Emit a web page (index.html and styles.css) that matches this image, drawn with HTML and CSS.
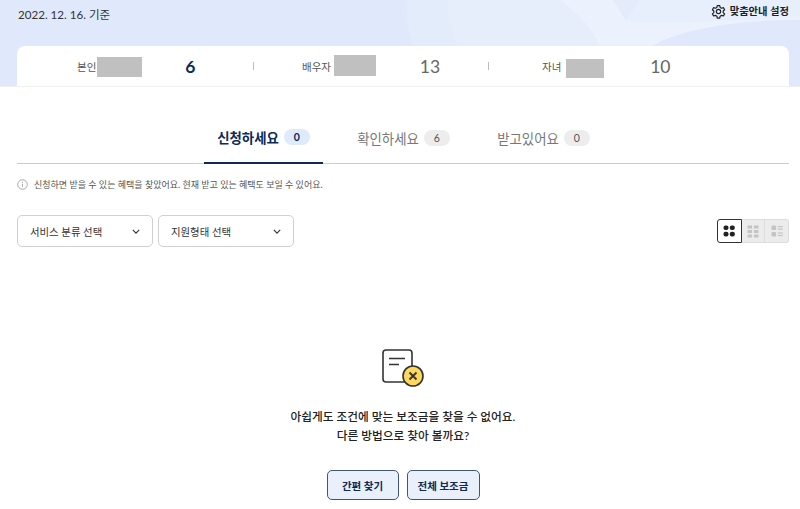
FILE: index.html
```html
<!DOCTYPE html>
<html lang="ko">
<head>
    <meta charset="UTF-8">
    <meta name="viewport" content="width=device-width, initial-scale=1.0">
    <title>맞춤안내</title>
    <link rel="stylesheet" href="styles.css">
</head>
<body>
    <header class="hero">
        <!-- decorative shapes behind the header -->
        <svg class="hero-bg" width="800" height="46" viewBox="0 0 800 46" aria-hidden="true">
            <path d="M408 0 C405 15 409 35 413 46 H800 V0 Z" fill="#e3ecfb"/>
            <path d="M448 0 C447 15 452 35 458 46 H800 V0 Z" fill="#e6eefc"/>
            <path d="M560 0 C578 13 592 28 600 46 H800 V0 Z" fill="#ebf1fd"/>
            <path d="M613 0 L640 0 L626 21 Z" fill="#e4ecfb"/>
            <path d="M640 0 L626 21 C660 24 720 22 800 16 V0 Z" fill="#e8effc"/>
            <path d="M652 46 C680 30 730 20 800 20 V46 Z" fill="#e0e9fb"/>
        </svg>
        <div class="hero-top">
            <span class="base-date">2022. 12. 16. 기준</span>
            <a class="settings-link" href="#">
                <svg width="15" height="15" viewBox="0 0 24 24" fill="none" stroke="#222" stroke-width="1.9" stroke-linejoin="round">
                    <path d="M10 2.5h4l.6 3 2.3 1.3 2.9-1 2 3.4-2.3 2 0 2.6 2.3 2-2 3.4-2.9-1-2.3 1.3-.6 3h-4l-.6-3-2.3-1.3-2.9 1-2-3.4 2.3-2 0-2.6-2.3-2 2-3.4 2.9 1 2.3-1.3z"/>
                    <circle cx="12" cy="12" r="3.4"/>
                </svg>
                맞춤안내 설정
            </a>
        </div>
        <div class="stat-card">
            <div class="stat stat-self">
                <span class="stat-label">본인</span>
                <span class="mask mask-self"></span>
                <strong class="stat-value active">6</strong>
            </div>
            <div class="stat stat-spouse">
                <span class="stat-label">배우자</span>
                <span class="mask mask-spouse"></span>
                <strong class="stat-value">13</strong>
            </div>
            <div class="stat stat-child">
                <span class="stat-label">자녀</span>
                <span class="mask mask-child"></span>
                <strong class="stat-value">10</strong>
            </div>
        </div>
    </header>

    <main class="content">
        <nav class="tabs">
            <a class="tab active" href="#">신청하세요 <span class="count">0</span></a>
            <a class="tab" href="#">확인하세요 <span class="count">6</span></a>
            <a class="tab" href="#">받고있어요 <span class="count">0</span></a>
        </nav>

        <p class="notice">
            <svg width="11" height="11" viewBox="0 0 12 12" fill="none" stroke="#8a8a8a" stroke-width="0.8">
                <circle cx="6" cy="6" r="5.2"/>
                <path d="M6 5.2v3.4M6 3.2v1"/>
            </svg>
            신청하면 받을 수 있는 혜택을 찾았어요. 현재 받고 있는 혜택도 보일 수 있어요.
        </p>

        <div class="filters">
            <div class="selects">
                <button class="select" type="button">
                    서비스 분류 선택
                    <svg width="8" height="5" viewBox="0 0 10 6" fill="none" stroke="#333" stroke-width="1.4"><path d="M1 1l4 4 4-4"/></svg>
                </button>
                <button class="select" type="button">
                    지원형태 선택
                    <svg width="8" height="5" viewBox="0 0 10 6" fill="none" stroke="#333" stroke-width="1.4"><path d="M1 1l4 4 4-4"/></svg>
                </button>
            </div>
            <div class="view-toggle">
                <button class="view active" type="button">
                    <svg width="12" height="12" viewBox="0 0 12 12" fill="#222">
                        <rect x="0.5" y="0.5" width="5" height="4.6" rx="2"/>
                        <rect x="6.8" y="0.5" width="5" height="4.6" rx="2"/>
                        <rect x="0.5" y="6.8" width="5" height="4.6" rx="2"/>
                        <rect x="6.8" y="6.8" width="5" height="4.6" rx="2"/>
                    </svg>
                </button>
                <button class="view" type="button">
                    <svg width="12" height="13" viewBox="0 0 12 13" fill="#c4c4c4">
                        <rect x="0.5" y="0.5" width="4.6" height="3"/>
                        <rect x="6.9" y="0.5" width="4.6" height="3"/>
                        <rect x="0.5" y="5" width="4.6" height="3"/>
                        <rect x="6.9" y="5" width="4.6" height="3"/>
                        <rect x="0.5" y="9.5" width="4.6" height="3"/>
                        <rect x="6.9" y="9.5" width="4.6" height="3"/>
                    </svg>
                </button>
                <button class="view" type="button">
                    <svg width="12" height="12" viewBox="0 0 12 12" fill="#c4c4c4">
                        <rect x="0.5" y="0.5" width="4.6" height="4.6" rx="1"/>
                        <rect x="0.5" y="6.9" width="4.6" height="4.6" rx="1"/>
                        <rect x="6.8" y="1" width="5" height="1.2"/>
                        <rect x="6.8" y="3.5" width="5" height="1.2"/>
                        <rect x="6.8" y="7.4" width="5" height="1.2"/>
                        <rect x="6.8" y="9.9" width="5" height="1.2"/>
                    </svg>
                </button>
            </div>
        </div>

        <section class="empty">
            <svg class="empty-icon" width="44" height="40" viewBox="0 0 44 40" fill="none">
                <rect x="1" y="1" width="29" height="32" rx="3" stroke="#333" stroke-width="1.6" fill="#fff"/>
                <path d="M7 9.5h16M7 15.5h10" stroke="#333" stroke-width="1.6"/>
                <circle cx="31" cy="27" r="10" fill="#fdd85c" stroke="#333" stroke-width="1.6"/>
                <path d="M27.5 23.5l7 7M34.5 23.5l-7 7" stroke="#333" stroke-width="1.8"/>
            </svg>
            <p class="empty-text">아쉽게도 조건에 맞는 보조금을 찾을 수 없어요.<br>다른 방법으로 찾아 볼까요?</p>
            <div class="empty-actions">
                <a class="btn btn-short" href="#">간편 찾기</a>
                <a class="btn btn-wide" href="#">전체 보조금</a>
            </div>
        </section>
    </main>
</body>
</html>
```

FILE: styles.css
```css
* {
    box-sizing: border-box;
}

body {
    margin: 0;
    background: #fff;
    color: #222;
    font-family: Lato, "Noto Sans CJK KR", sans-serif;
    height: 509px;
    overflow: hidden;
}

a {
    color: inherit;
    text-decoration: none;
}

button {
    font-family: inherit;
}

/* header */
.hero {
    position: relative;
    height: 87px;
    padding: 0 11px 0 17px;
    background: #dfe9fb;
    border-bottom: 1px solid #f0f0f0;
    overflow: hidden;
}

.hero-bg {
    position: absolute;
    left: 0;
    top: 0;
}

.hero-top {
    position: relative;
    display: flex;
    justify-content: space-between;
    height: 46px;
    padding-top: 5px;
}

.base-date {
    margin: 1px 0 0 1px;
    font-size: 11.6px;
    line-height: 18px;
    color: #333;
}

.settings-link {
    display: flex;
    align-items: center;
    gap: 4px;
    height: 13px;
    font-size: 10.3px;
    font-weight: 700;
    line-height: 13px;
    color: #222;
}

.stat-card {
    position: relative;
    display: grid;
    grid-template-columns: 236px 235px 1fr;
    align-items: center;
    height: 40px;
    background: #fff;
    border-radius: 8px 8px 0 0;
}

.stat {
    display: flex;
    align-items: center;
    height: 100%;
}

.stat + .stat::before {
    content: "";
    position: absolute;
    width: 1px;
    height: 8px;
    top: 16px;
    background: #bdbdbd;
}

.stat-self {
    padding-left: 60px;
}

.stat-spouse {
    padding-left: 49px;
}

.stat-child {
    padding-left: 54px;
}

.stat-spouse::before {
    margin-left: -49px;
}

.stat-child::before {
    margin-left: -54px;
}

.stat-label {
    font-size: 10.5px;
    color: #555;
}

.mask {
    display: block;
    background: #c0c0c0;
}

.mask-self {
    width: 45px;
    height: 20px;
    margin-left: 1px;
    margin-top: 1px;
}

.mask-spouse {
    width: 42px;
    height: 21px;
    margin-left: 3px;
    margin-top: -2px;
}

.mask-child {
    width: 38px;
    height: 19px;
    margin-left: 5px;
    margin-top: 4px;
}

.stat-value {
    font-size: 17.5px;
    font-weight: 400;
    color: #666;
    text-align: center;
    width: 30px;
}

.stat-value.active {
    font-weight: 700;
    color: #0e2a56;
}

.stat-self .stat-value {
    margin-left: 33px;
}

.stat-spouse .stat-value {
    margin-left: 39px;
}

.stat-child .stat-value {
    margin-left: 41px;
}

/* tabs */
.content {
    padding: 0 11px 0 17px;
}

.tabs {
    display: flex;
    justify-content: center;
    gap: 21px;
    height: 77px;
    padding: 31px 0 0 1px;
    border-bottom: 1px solid #ccc;
}

.tab {
    display: flex;
    align-items: center;
    justify-content: center;
    gap: 5px;
    width: 119px;
    height: 46px;
    padding-bottom: 6px;
    font-size: 13.4px;
    color: #777;
}

.tab.active {
    font-weight: 700;
    color: #0e2a56;
    border-bottom: 2px solid #0e2a56;
}

.count {
    display: inline-block;
    width: 26px;
    height: 16px;
    border-radius: 8px;
    background: #ededed;
    color: #555;
    font-size: 10.5px;
    font-weight: 400;
    line-height: 16px;
    text-align: center;
}

.active .count {
    background: #dfebfb;
    color: #0e2a56;
    font-weight: 700;
}

.notice {
    display: flex;
    align-items: center;
    gap: 6px;
    margin: 13px 0 0;
    height: 14px;
    font-size: 9px;
    color: #555;
}

/* filters */
.filters {
    display: flex;
    justify-content: space-between;
    align-items: center;
    margin-top: 24px;
}

.selects {
    display: flex;
    gap: 5px;
}

.select {
    display: flex;
    align-items: center;
    justify-content: space-between;
    width: 136px;
    height: 32px;
    padding: 0 12px;
    background: #fff;
    border: 1px solid #d0d0d0;
    border-radius: 5px;
    font-size: 10.4px;
    color: #333;
}

.view-toggle {
    display: flex;
    width: 72px;
    height: 24px;
}

.view {
    display: flex;
    align-items: center;
    justify-content: center;
    flex: 1;
    padding: 0;
    background: #ececec;
    border: 1px solid #ddd;
    border-left: 0;
}

.view:last-child {
    border-radius: 0 3px 3px 0;
}

.view.active {
    background: #fff;
    border: 1px solid #333;
    border-radius: 3px 0 0 3px;
}

/* empty state */
.empty {
    display: flex;
    flex-direction: column;
    align-items: center;
    margin-top: 102px;
}

.empty-icon {
    margin-left: 2px;
}

.empty-text {
    margin: 18px 0 0;
    font-size: 11.7px;
    font-weight: 500;
    line-height: 19px;
    text-align: center;
    color: #222;
}

.empty-actions {
    display: flex;
    gap: 8px;
    margin-top: 25px;
}

.btn {
    display: flex;
    align-items: center;
    justify-content: center;
    height: 30px;
    background: #e9f0fb;
    border: 1px solid #3f5675;
    border-radius: 5px;
    font-size: 10.5px;
    font-weight: 700;
    color: #0e2a56;
}

.btn-short {
    width: 72px;
}

.btn-wide {
    width: 73px;
}
```
